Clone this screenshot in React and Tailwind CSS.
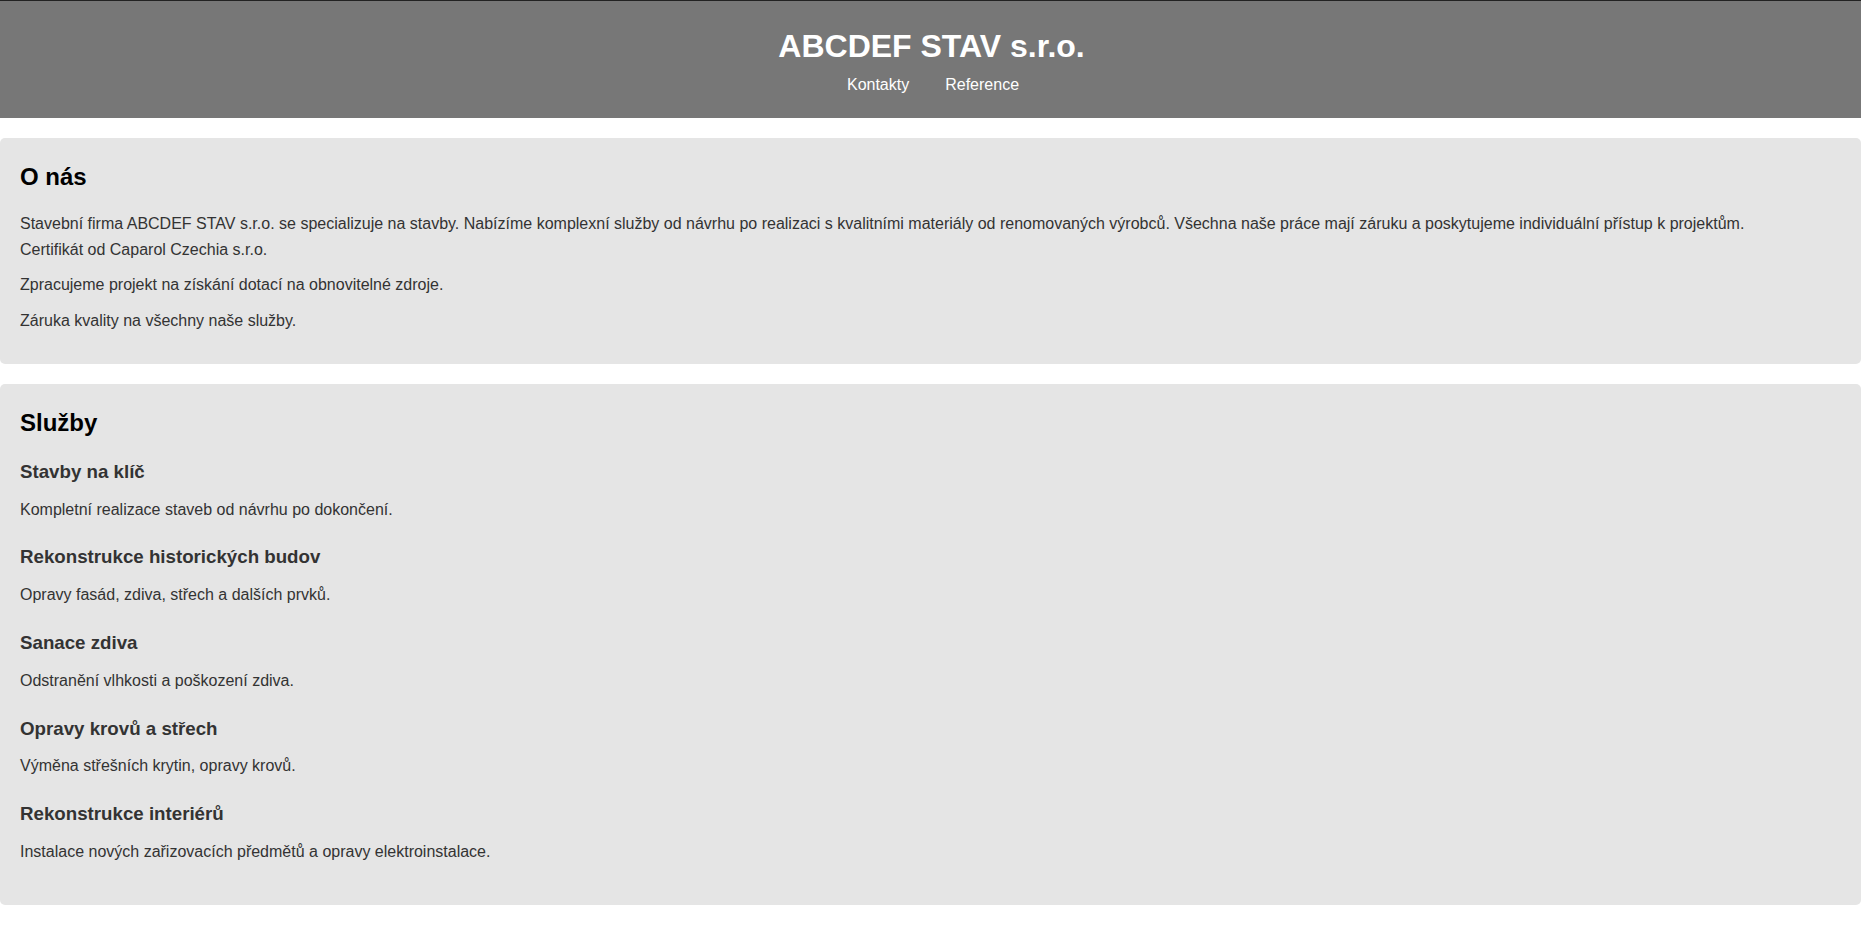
const services = [
  { title: "Stavby na klíč", text: "Kompletní realizace staveb od návrhu po dokončení." },
  { title: "Rekonstrukce historických budov", text: "Opravy fasád, zdiva, střech a dalších prvků." },
  { title: "Sanace zdiva", text: "Odstranění vlhkosti a poškození zdiva." },
  { title: "Opravy krovů a střech", text: "Výměna střešních krytin, opravy krovů." },
  { title: "Rekonstrukce interiérů", text: "Instalace nových zařizovacích předmětů a opravy elektroinstalace." },
];

const Header = () => {
  return (
    <header className="bg-[#777777] border-t border-[#222222] py-5 text-center text-white">
      <h1 className="pl-[2px] text-[32px] font-bold leading-[1.6]">ABCDEF STAV s.r.o.</h1>
      <nav className="flex justify-center gap-[36px] pl-[5px] text-base leading-[1.6]">
        <a href="#kontakty" className="text-white">Kontakty</a>
        <a href="#reference" className="text-white">Reference</a>
      </nav>
    </header>
  );
};

const Section = ({ title, children }) => {
  return (
    <section className="my-5 rounded-[5px] bg-[#e5e5e5] p-5">
      <h2 className="mb-[15px] text-2xl font-bold leading-[1.6] text-black">{title}</h2>
      {children}
    </section>
  );
};

export default function App() {
  return (
    <div className="min-h-screen bg-white text-base leading-[1.6] text-[#333333] font-['Liberation_Sans',Arial,sans-serif]">
      <Header />
      <main>
        <Section title="O nás">
          <p className="mb-[10px]">
            Stavební firma ABCDEF STAV s.r.o. se specializuje na stavby. Nabízíme komplexní služby od návrhu po realizaci s kvalitními materiály od renomovaných výrobců. Všechna naše práce mají záruku a poskytujeme individuální přístup k projektům.
            <br />
            Certifikát od Caparol Czechia s.r.o.
          </p>
          <p className="mb-[10px]">Zpracujeme projekt na získání dotací na obnovitelné zdroje.</p>
          <p className="mb-[10px]">Záruka kvality na všechny naše služby.</p>
        </Section>
        <Section title="Služby">
          {services.map((s) => (
            <div key={s.title} className="mb-5">
              <h3 className="mb-[10px] text-[18.72px] font-bold leading-[1.6] text-[#333333]">{s.title}</h3>
              <p>{s.text}</p>
            </div>
          ))}
        </Section>
      </main>
    </div>
  );
}
